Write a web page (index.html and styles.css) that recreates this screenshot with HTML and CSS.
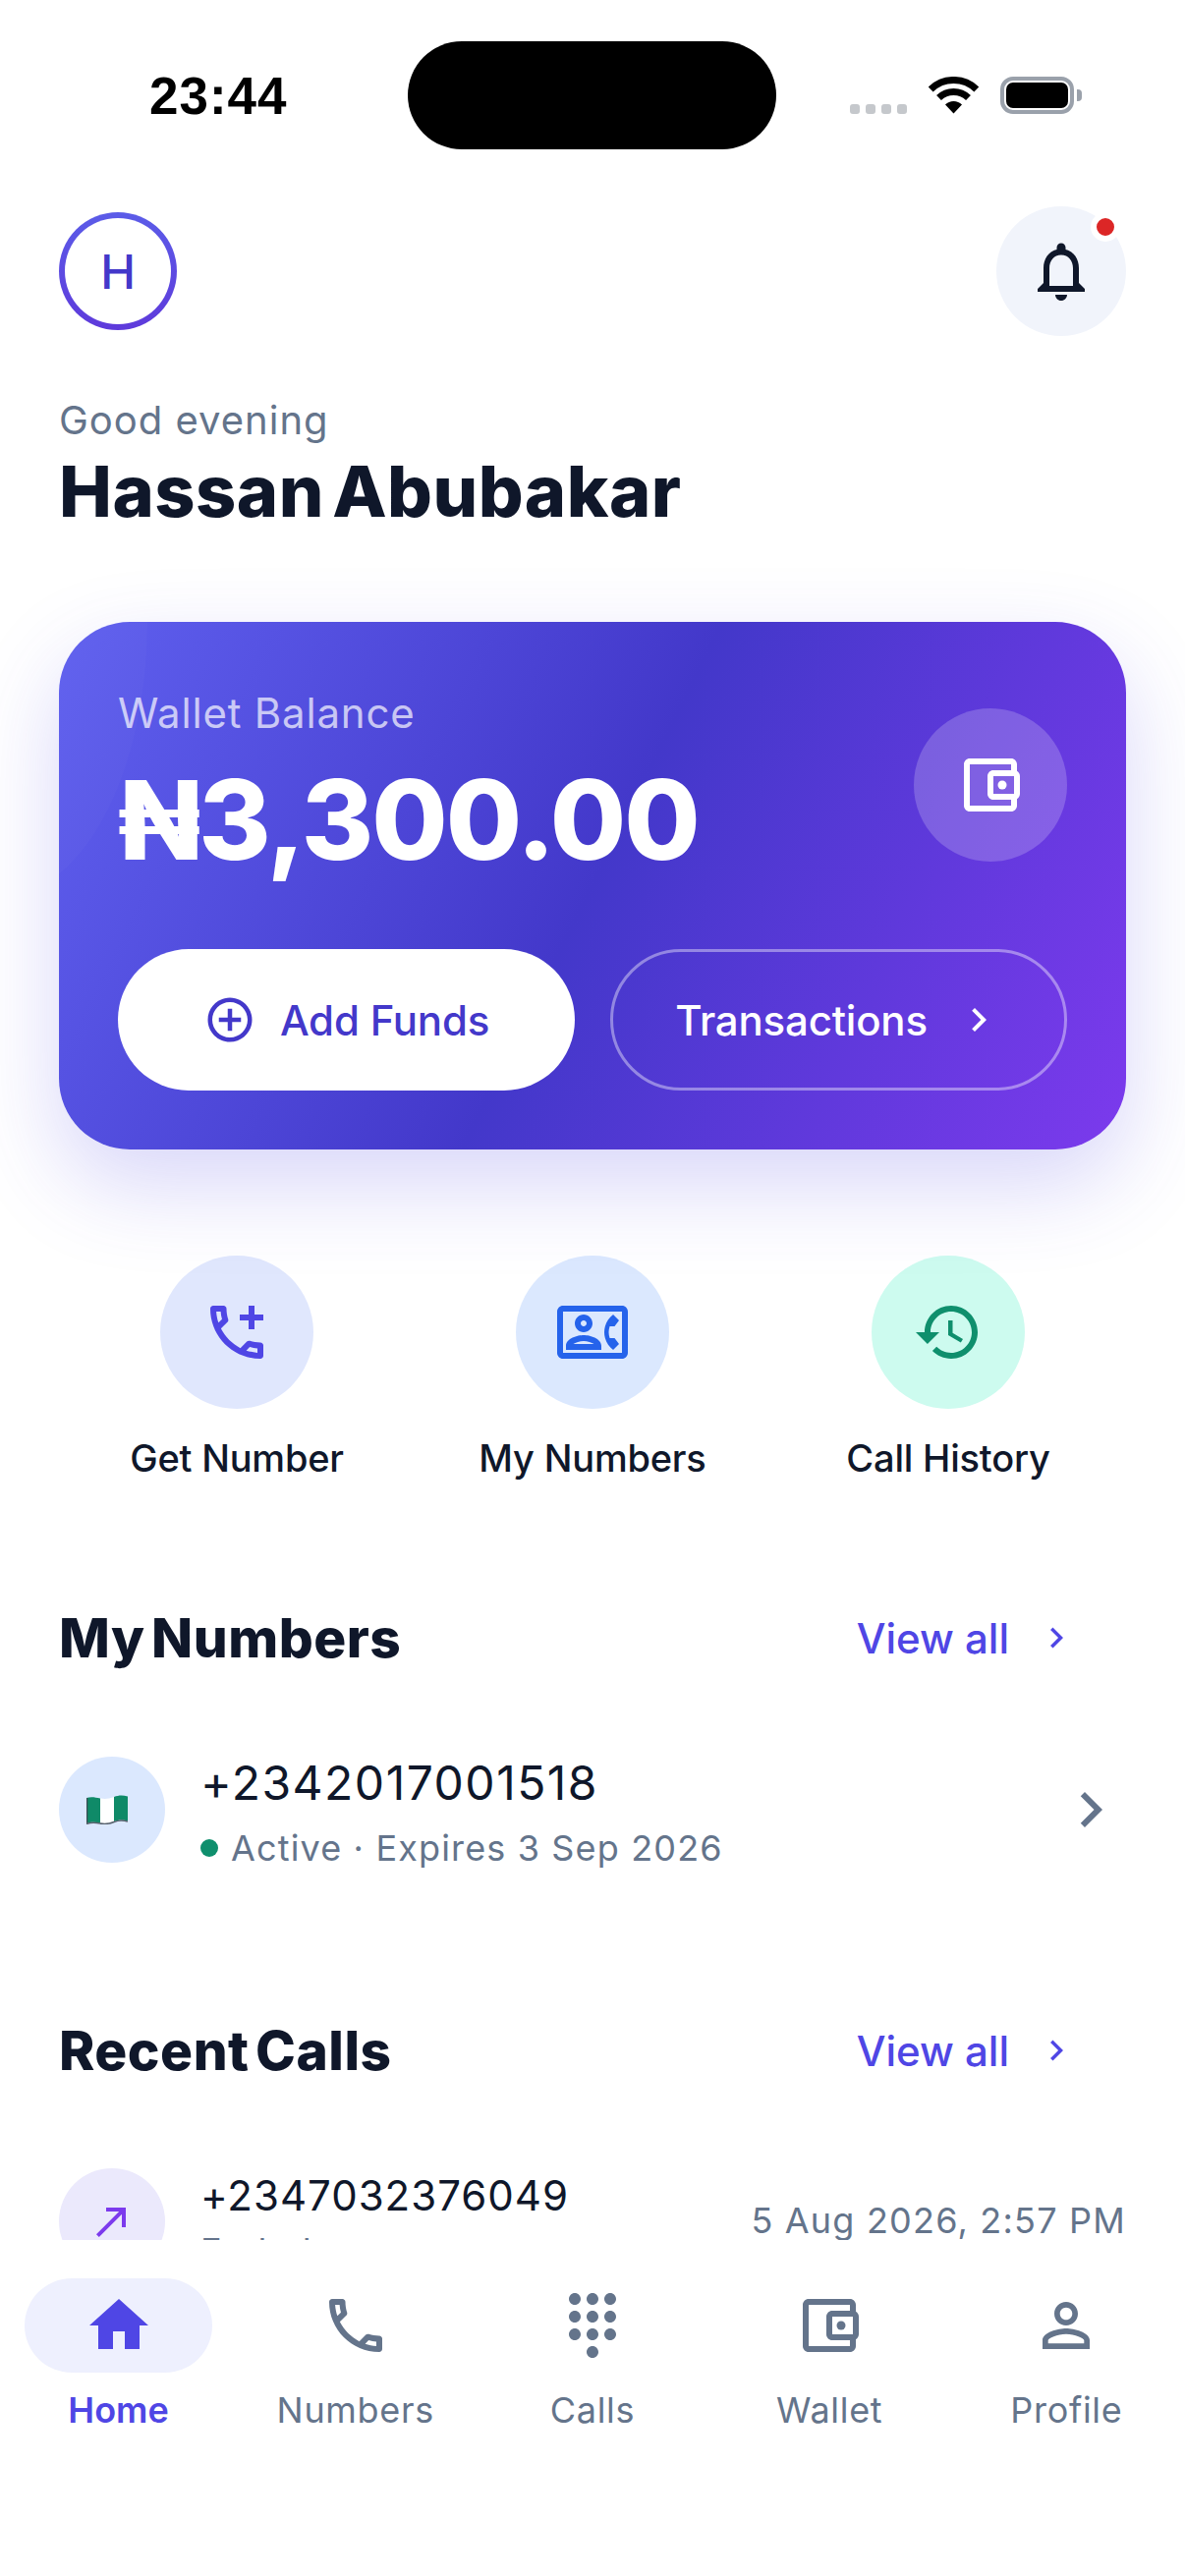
FILE: index.html
```html
<!DOCTYPE html>
<html lang="en">
<head>
<meta charset="utf-8">
<title>Home</title>
<link rel="stylesheet" href="styles.css">
</head>
<body>
<div class="phone">
  <div class="status">
    <div class="status-left"><span class="time">23:44</span></div>
    <div class="island"></div>
    <div class="status-right">
      <div class="signal"><i></i><i></i><i></i><i></i></div>
      <svg class="wifi" viewBox="0 0 51 38" width="51" height="38"><path d="M2.2 12.9A33.5 33.5 0 0 1 48.8 12.9M10.5 21.5A21.5 21.5 0 0 1 40.5 21.5" fill="none" stroke="#000" stroke-width="7"/><path d="M25.5 37.5L17 28.6A12 12 0 0 1 34 28.6Z"/></svg>
      <div class="battery"><div class="battery-fill"></div></div>
    </div>
  </div>

  <main class="main">
    <header class="top">
      <div class="avatar">H</div>
      <div class="bell">
        <svg class="ic72" viewBox="0 0 24 24"><path fill="#0f172a" d="M12 22c1.1 0 2-.9 2-2h-4c0 1.1.9 2 2 2zm6-6v-5c0-3.07-1.63-5.64-4.5-6.32V4c0-.83-.67-1.5-1.5-1.5s-1.5.67-1.5 1.5v.68C7.64 5.36 6 7.92 6 11v5l-2 2v1h16v-1l-2-2zm-2 1H8v-6c0-2.48 1.51-4.5 4-4.5s4 2.02 4 4.5v6z"/></svg>
        <span class="bell-dot"></span>
      </div>
    </header>

    <p class="greeting">Good evening</p>
    <h1 class="name">Hassan Abubakar</h1>

    <section class="card">
      <div class="card-top">
        <div>
          <p class="card-label">Wallet Balance</p>
          <p class="amount">₦3,300.00</p>
        </div>
        <div class="card-icon">
          <svg class="ic72" viewBox="0 0 24 24" fill="#fff"><path d="M21 7.28V5c0-1.1-.9-2-2-2H5c-1.11 0-2 .9-2 2v14c0 1.1.89 2 2 2h14c1.1 0 2-.9 2-2v-2.28c.59-.35 1-.98 1-1.72V9c0-.74-.41-1.37-1-1.72zM20 9v6h-7V9h7zM5 19V5h14v2h-6c-1.1 0-2 .9-2 2v6c0 1.1.9 2 2 2h6v2H5z"/><circle cx="16" cy="12" r="1.5"/></svg>
        </div>
      </div>
      <div class="card-actions">
        <button class="btn btn-solid">
          <svg class="ic54" viewBox="0 0 24 24" fill="#4338ca"><path d="M13 7h-2v4H7v2h4v4h2v-4h4v-2h-4V7zm-1-5C6.48 2 2 6.48 2 12s4.48 10 10 10 10-4.48 10-10S17.52 2 12 2zm0 18c-4.41 0-8-3.59-8-8s3.59-8 8-8 8 3.59 8 8-3.59 8-8 8z"/></svg>
          Add Funds
        </button>
        <button class="btn btn-ghost">
          Transactions
          <svg class="ic48" viewBox="0 0 24 24" fill="#fff"><path d="M10 6L8.59 7.41 13.17 12l-4.58 4.59L10 18l6-6z"/></svg>
        </button>
      </div>
    </section>

    <nav class="quick">
      <div class="quick-item">
        <div class="quick-circle tint-indigo">
          <svg class="ic72" viewBox="0 0 24 24" fill="#4f46e5"><path d="M6.54 5c.06.89.21 1.76.45 2.59l-1.2 1.2c-.41-1.2-.67-2.47-.76-3.79h1.51m9.86 12.02c.85.24 1.72.39 2.6.45v1.49c-1.32-.09-2.59-.35-3.8-.75l1.2-1.19M7.5 3H4c-.55 0-1 .45-1 1 0 9.39 7.61 17 17 17 .55 0 1-.45 1-1v-3.49c0-.55-.45-1-1-1-1.24 0-2.45-.2-3.57-.57-.1-.04-.21-.05-.31-.05-.26 0-.51.1-.71.29l-2.2 2.2c-2.83-1.45-5.15-3.76-6.59-6.59l2.2-2.2c.28-.28.36-.67.25-1.02C8.7 6.45 8.5 5.25 8.5 4c0-.55-.45-1-1-1z"/><path d="M16 3h2v3h3v2h-3v3h-2V8h-3V6h3z"/></svg>
        </div>
        <span class="quick-label">Get Number</span>
      </div>
      <div class="quick-item">
        <div class="quick-circle tint-blue">
          <svg class="ic72" viewBox="0 0 24 24" fill="#2563eb"><path d="M22 3H2C.9 3 0 3.9 0 5v14c0 1.1.9 2 2 2h20c1.1 0 1.99-.9 1.99-2L24 5c0-1.1-.9-2-2-2zm0 16H2V5h20v14zm-2.99-1.01 1.99-2-1.51-2h-1.64c-.22-.63-.35-1.3-.35-2s.13-1.37.35-2h1.64l1.51-2-1.99-2c-1.31.98-2.28 2.37-2.73 4-.18.64-.28 1.31-.28 2s.1 1.36.28 2c.45 1.62 1.42 3.02 2.73 4zM9 12c1.65 0 3-1.35 3-3s-1.35-3-3-3-3 1.35-3 3 1.35 3 3 3zm0-4c.55 0 1 .45 1 1s-.45 1-1 1-1-.45-1-1 .45-1 1-1zm6 8.59c0-2.5-3.97-3.58-6-3.58s-6 1.08-6 3.58V18h12v-1.41zM5.48 16c.74-.5 2.22-1 3.52-1s2.77.49 3.52 1H5.48z"/></svg>
        </div>
        <span class="quick-label">My Numbers</span>
      </div>
      <div class="quick-item">
        <div class="quick-circle tint-mint">
          <svg class="ic72" viewBox="0 0 24 24" fill="#0f8f6d"><path d="M13 3c-4.97 0-9 4.03-9 9H1l3.89 3.89.07.14L9 12H6c0-3.87 3.13-7 7-7s7 3.13 7 7-3.13 7-7 7c-1.93 0-3.68-.79-4.94-2.06l-1.42 1.42C8.27 19.99 10.51 21 13 21c4.97 0 9-4.03 9-9s-4.03-9-9-9zm-1 5v5l4.28 2.54.72-1.21-3.5-2.08V8H12z"/></svg>
        </div>
        <span class="quick-label">Call History</span>
      </div>
    </nav>

    <div class="section-head head-numbers">
      <h2 class="section-title">My Numbers</h2>
      <a class="view-all">View all
        <svg class="ic42" viewBox="0 0 24 24" fill="#4f46e5"><path d="M10 6L8.59 7.41 13.17 12l-4.58 4.59L10 18l6-6z"/></svg>
      </a>
    </div>

    <div class="row row-number">
      <div class="row-circle tint-blue">
        <svg class="flag" viewBox="0 0 42 30" width="42" height="30">
          <path d="M0 3c5-1.5 9-.5 14 .5v25c-5-1-9-1.500-14 .5z" fill="#0f8a68"/>
          <path d="M14 3.500c5 1 9 .5 14-1.500v25c-5 2-9 2.500-14 1.500z" fill="#fff"/>
          <path d="M28 2c5-2 9-2 14-.5v25c-5-1.500-9-1.500-14 .5z" fill="#0f8a68"/>
          <path d="M.5 3v26.500" fill="none" stroke="#3c4a52" stroke-width="1.500"/>
          <path d="M0 29.500c5-2 9-1.500 14-.5s9 .5 14-1.500 9-2 14-.5" fill="none" stroke="#56606b" stroke-width="1.500"/>
        </svg>
      </div>
      <div class="row-text">
        <p class="number">+2342017001518</p>
        <p class="sub"><span class="dot"></span>Active · Expires 3 Sep 2026</p>
      </div>
      <svg class="ic72" viewBox="0 0 24 24" fill="#64748b"><path d="M10 6L8.59 7.41 13.17 12l-4.58 4.59L10 18l6-6z"/></svg>
    </div>

    <div class="section-head head-calls">
      <h2 class="section-title">Recent Calls</h2>
      <a class="view-all">View all
        <svg class="ic42" viewBox="0 0 24 24" fill="#4f46e5"><path d="M10 6L8.59 7.41 13.17 12l-4.58 4.59L10 18l6-6z"/></svg>
      </a>
    </div>

    <div class="row row-call">
      <div class="row-circle tint-violet">
        <svg class="ic48" viewBox="0 0 24 24" fill="#7c3aed"><path d="M9 5v2h6.590L4 18.590 5.410 20 17 8.410V15h2V5z"/></svg>
      </div>
      <div class="row-text">
        <p class="number number-call">+2347032376049</p>
        <p class="sub sub-call">Ended</p>
      </div>
      <span class="date">5 Aug 2026, 2:57 PM</span>
    </div>
  </main>

  <nav class="tabs">
    <div class="tab tab-active">
      <div class="tab-icon">
        <svg class="ic72" viewBox="0 0 24 24" fill="#4f46e5"><path d="M10 20v-6h4v6h5v-8h3L12 3 2 12h3v8z"/></svg>
      </div>
      <span class="tab-label">Home</span>
    </div>
    <div class="tab">
      <div class="tab-icon">
        <svg class="ic72" viewBox="0 0 24 24" fill="#64748b"><path d="M6.54 5c.06.89.21 1.76.45 2.59l-1.2 1.2c-.41-1.2-.67-2.47-.76-3.79h1.51m9.86 12.02c.85.24 1.72.39 2.6.45v1.49c-1.32-.09-2.59-.35-3.8-.75l1.2-1.19M7.5 3H4c-.55 0-1 .45-1 1 0 9.39 7.61 17 17 17 .55 0 1-.45 1-1v-3.49c0-.55-.45-1-1-1-1.24 0-2.45-.2-3.57-.57-.1-.04-.21-.05-.31-.05-.26 0-.51.1-.71.29l-2.2 2.2c-2.83-1.45-5.15-3.76-6.59-6.59l2.2-2.2c.28-.28.36-.67.25-1.02C8.7 6.45 8.5 5.25 8.5 4c0-.55-.45-1-1-1z"/></svg>
      </div>
      <span class="tab-label">Numbers</span>
    </div>
    <div class="tab">
      <div class="tab-icon">
        <svg class="ic72" viewBox="0 0 24 24" fill="#64748b"><path d="M12 19c-1.100 0-2 .9-2 2s.9 2 2 2 2-.9 2-2-.9-2-2-2zM6 1c-1.100 0-2 .9-2 2s.9 2 2 2 2-.9 2-2-.9-2-2-2zm0 6c-1.100 0-2 .9-2 2s.9 2 2 2 2-.9 2-2-.9-2-2-2zm0 6c-1.100 0-2 .9-2 2s.9 2 2 2 2-.9 2-2-.9-2-2-2zm12-8c1.100 0 2-.9 2-2s-.9-2-2-2-2 .9-2 2 .9 2 2 2zm-6 8c-1.100 0-2 .9-2 2s.9 2 2 2 2-.9 2-2-.9-2-2-2zm6 0c-1.100 0-2 .9-2 2s.9 2 2 2 2-.9 2-2-.9-2-2-2zm0-6c-1.100 0-2 .9-2 2s.9 2 2 2 2-.9 2-2-.9-2-2-2zm-6 0c-1.100 0-2 .9-2 2s.9 2 2 2 2-.9 2-2-.9-2-2-2zm0-6c-1.100 0-2 .9-2 2s.9 2 2 2 2-.9 2-2-.9-2-2-2z"/></svg>
      </div>
      <span class="tab-label">Calls</span>
    </div>
    <div class="tab">
      <div class="tab-icon">
        <svg class="ic72" viewBox="0 0 24 24" fill="#64748b"><path d="M21 7.28V5c0-1.100-.9-2-2-2H5c-1.110 0-2 .9-2 2v14c0 1.100.89 2 2 2h14c1.100 0 2-.9 2-2v-2.280c.59-.35 1-.98 1-1.720V9c0-.74-.41-1.370-1-1.720zM20 9v6h-7V9h7zM5 19V5h14v2h-6c-1.100 0-2 .9-2 2v6c0 1.100.9 2 2 2h6v2H5z"/><circle cx="16" cy="12" r="1.5"/></svg>
      </div>
      <span class="tab-label">Wallet</span>
    </div>
    <div class="tab">
      <div class="tab-icon">
        <svg class="ic72" viewBox="0 0 24 24" fill="#64748b"><path d="M12 5.900c1.160 0 2.100.94 2.100 2.100s-.94 2.100-2.100 2.100S9.900 9.160 9.900 8s.94-2.100 2.100-2.100m0 9c2.970 0 6.100 1.460 6.100 2.100v1.100H5.900V17c0-.64 3.130-2.100 6.100-2.100M12 4C9.790 4 8 5.790 8 8s1.790 4 4 4 4-1.790 4-4-1.790-4-4-4zm0 9c-2.670 0-8 1.340-8 4v3h16v-3c0-2.660-5.330-4-8-4z"/></svg>
      </div>
      <span class="tab-label">Profile</span>
    </div>
  </nav>
</div>
</body>
</html>
```

FILE: styles.css
```css
* { box-sizing: border-box; margin: 0; padding: 0; }

html, body { background: #fff; }

body {
  font-family: "Inter", "Liberation Sans", sans-serif;
  color: #0f172a;
}

.phone {
  width: 1206px;
  height: 2622px;
  display: flex;
  flex-direction: column;
  overflow: hidden;
  background: #fff;
}

/* Icon boxes */
.ic42 { width: 42px; height: 42px; flex: none; }
.ic48 { width: 48px; height: 48px; flex: none; }
.ic54 { width: 54px; height: 54px; flex: none; }
.ic72 { width: 72px; height: 72px; flex: none; display: block; }

/* Status bar */
.status {
  height: 210px;
  flex: none;
  display: flex;
  padding-top: 42px;
  align-items: flex-start;
}
.status-left {
  width: 415px;
  height: 110px;
  padding-left: 152px;
  display: flex;
  align-items: center;
}
.time {
  font-family: "Liberation Sans", sans-serif;
  font-weight: 700;
  font-size: 53px;
  line-height: 1;
  letter-spacing: 1px;
  color: #000;
}
.island {
  width: 375px;
  height: 110px;
  border-radius: 55px;
  background: #000;
}
.status-right {
  height: 110px;
  padding: 0 0 36px 75px;
  display: flex;
  align-items: flex-end;
}
.signal { display: flex; gap: 6px; margin-right: 22px; }
.signal i {
  display: block;
  width: 10px;
  height: 10px;
  border-radius: 3px;
  background: #c5c8cc;
}
.wifi { display: block; margin-right: 22px; }
.battery {
  position: relative;
  width: 75px;
  height: 38px;
  border: 4px solid #9aa1ab;
  border-radius: 13px;
  padding: 2px;
}
.battery::after {
  content: "";
  position: absolute;
  left: 74px;
  top: 9px;
  width: 5px;
  height: 12px;
  border-radius: 0 4px 4px 0;
  background: #9aa1ab;
}
.battery-fill {
  width: 100%;
  height: 100%;
  border-radius: 7px;
  background: #000;
}

/* Scrolling content, cut off above the tab bar */
.main {
  height: 2070px;
  flex: none;
  padding: 0 60px;
  overflow: hidden;
}

.top {
  height: 132px;
  display: flex;
  align-items: center;
  justify-content: space-between;
}
.avatar {
  width: 120px;
  height: 120px;
  border: 6px solid transparent;
  border-radius: 50%;
  background: linear-gradient(#fff, #fff) padding-box,
              linear-gradient(180deg, #5b5ce8, #5e3adb) border-box;
  display: flex;
  align-items: center;
  justify-content: center;
  font-size: 48px;
  font-weight: 500;
  color: #4338ca;
}
.bell {
  position: relative;
  width: 132px;
  height: 132px;
  border-radius: 50%;
  background: #f1f4fb;
  display: flex;
  align-items: center;
  justify-content: center;
}
.bell-dot {
  position: absolute;
  top: 6px;
  right: 6px;
  width: 30px;
  height: 30px;
  border: 6px solid #fff;
  border-radius: 50%;
  background: #dc2626;
}

.greeting {
  margin-top: 59px;
  font-size: 40px;
  line-height: 54px;
  letter-spacing: 1px;
  color: #64748b;
}
.name {
  font-size: 72px;
  line-height: 90px;
  font-weight: 800;
  letter-spacing: 0.5px;
  word-spacing: -8px;
  color: #0f172a;
}

/* Wallet card */
.card {
  position: relative;
  margin-top: 88px;
  height: 537px;
  padding: 66px 60px 0;
  border-radius: 72px;
  background: linear-gradient(116.3deg, #5f60ef 0%, #4338ca 50%, #7c3aed 100%);
  box-shadow: 0 36px 90px rgba(79, 70, 229, 0.22);
  overflow: hidden;
}
.card::before {
  content: "";
  position: absolute;
  left: -210px;
  top: -280px;
  width: 300px;
  height: 560px;
  border-radius: 50%;
  background: rgba(255, 255, 255, 0.025);
}
.card-top {
  position: relative;
  display: flex;
  align-items: center;
  justify-content: space-between;
}
.card-label {
  font-size: 42px;
  line-height: 54px;
  letter-spacing: 0.8px;
  color: rgba(255, 255, 255, 0.7);
}
.amount {
  margin-top: 16px;
  font-size: 112px;
  line-height: 130px;
  font-weight: 800;
  letter-spacing: -2px;
  color: #fff;
}
.card-icon {
  width: 156px;
  height: 156px;
  border-radius: 50%;
  background: rgba(255, 255, 255, 0.2);
  display: flex;
  align-items: center;
  justify-content: center;
}
.card-actions {
  position: relative;
  margin-top: 67px;
  display: grid;
  grid-template-columns: 1fr 1fr;
  gap: 36px;
}
.btn {
  height: 144px;
  border-radius: 72px;
  font-family: inherit;
  font-size: 42px;
  font-weight: 500;
  letter-spacing: -0.2px;
  display: flex;
  align-items: center;
  justify-content: center;
  background: none;
  border: 0;
}
.btn-solid { gap: 24px; background: #fff; color: #4338ca; }
.btn-ghost {
  gap: 28px;
  border: 3px solid rgba(255, 255, 255, 0.4);
  color: #fff;
}

/* Quick actions */
.quick {
  margin-top: 108px;
  display: grid;
  grid-template-columns: repeat(3, 1fr);
}
.quick-item {
  display: flex;
  flex-direction: column;
  align-items: center;
  gap: 24px;
}
.quick-circle {
  width: 156px;
  height: 156px;
  border-radius: 50%;
  display: flex;
  align-items: center;
  justify-content: center;
}
.quick-label {
  font-size: 38px;
  line-height: 52px;
  font-weight: 500;
  letter-spacing: -0.2px;
  color: #0f172a;
}
.tint-indigo { background: #e0e7fd; }
.tint-blue { background: #dbe8fe; }
.tint-mint { background: #cdfbef; }
.tint-violet { background: #ebe9fc; }

/* Section headings */
.section-head {
  height: 72px;
  display: flex;
  align-items: center;
  justify-content: space-between;
}
.head-numbers { margin-top: 121px; }
.head-calls { margin-top: 155px; }
.section-title {
  font-size: 55px;
  line-height: 72px;
  font-weight: 800;
  letter-spacing: 0.5px;
  word-spacing: -6px;
  color: #0f172a;
}
.view-all {
  display: flex;
  align-items: center;
  gap: 27px;
  padding-right: 50px;
  font-size: 42px;
  font-weight: 500;
  color: #4f46e5;
}

/* List rows */
.row {
  height: 108px;
  display: flex;
  align-items: center;
}
.row-number { margin-top: 85px; }
.row-call { margin-top: 84px; }
.row-circle {
  width: 108px;
  height: 108px;
  flex: none;
  border-radius: 50%;
  display: flex;
  align-items: center;
  justify-content: center;
}
.flag { margin-right: 10px; }
.row-text {
  flex: 1;
  margin-left: 36px;
  padding-top: 8px;
}
.number {
  font-size: 48px;
  line-height: 56px;
  font-weight: 400;
  letter-spacing: 1.5px;
  color: #0f172a;
}
.sub {
  margin-top: 14px;
  display: flex;
  align-items: center;
  font-size: 36px;
  line-height: 48px;
  letter-spacing: 1.15px;
  color: #64748b;
}
.dot {
  width: 18px;
  height: 18px;
  margin-right: 13px;
  border-radius: 50%;
  background: #0f8f6d;
}
.number-call { font-size: 42px; line-height: 54px; letter-spacing: 1px; }
.sub-call { margin-top: 5px; }
.row-call .row-text { padding-top: 0; }
.date {
  margin-top: -2px;
  font-size: 36px;
  line-height: 40px;
  letter-spacing: 1.2px;
  color: #64748b;
}

/* Tab bar */
.tabs {
  flex: 1;
  padding-top: 39px;
  display: grid;
  grid-template-columns: repeat(5, 1fr);
  align-items: start;
  background: #fff;
}
.tab {
  display: flex;
  flex-direction: column;
  align-items: center;
  gap: 14px;
}
.tab-icon {
  width: 191px;
  height: 96px;
  border-radius: 48px;
  display: flex;
  align-items: center;
  justify-content: center;
}
.tab-active .tab-icon { background: #eef0fe; }
.tab-label {
  font-size: 36px;
  line-height: 48px;
  letter-spacing: 0.7px;
  color: #64748b;
}
.tab-active .tab-label { color: #4f46e5; font-weight: 600; letter-spacing: 0; }
```
